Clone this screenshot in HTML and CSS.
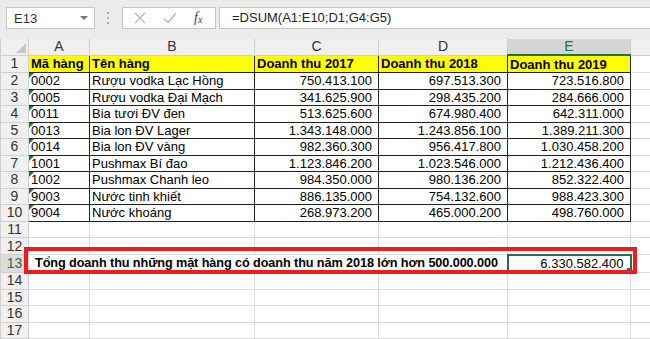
FILE: index.html
```html
<!DOCTYPE html>
<html lang="vi">
<head>
    <meta charset="UTF-8">
    <title>DSUM</title>
    <link rel="stylesheet" href="styles.css">
</head>
<body>
    <div class="toolbar">
        <div class="name-box">
            <span>E13</span>
            <span class="arrow"></span>
        </div>
        <svg class="grip" width="4" height="14" viewBox="0 0 4 14">
            <circle cx="2" cy="2" r="1" fill="#999"/>
            <circle cx="2" cy="7" r="1" fill="#999"/>
            <circle cx="2" cy="12" r="1" fill="#999"/>
        </svg>
        <div class="fx-box">
            <svg width="12" height="12" viewBox="0 0 12 12">
                <path d="M1 1 L11 11 M11 1 L1 11" stroke="#b4b4b4" stroke-width="1.2" fill="none"/>
            </svg>
            <svg width="14" height="12" viewBox="0 0 14 12">
                <path d="M1 6.5 L5 10.5 L13 1.5" stroke="#b4b4b4" stroke-width="1.3" fill="none"/>
            </svg>
            <span class="fx">f<sub>x</sub></span>
        </div>
        <div class="formula">=DSUM(A1:E10;D1;G4:G5)</div>
    </div>

    <div class="sheet">
        <table>
            <colgroup>
                <col style="width: 28px">
                <col style="width: 61px">
                <col style="width: 165px">
                <col style="width: 124px">
                <col style="width: 129px">
                <col style="width: 123px">
                <col style="width: 20px">
            </colgroup>
            <tr class="head">
                <th class="corner"></th>
                <th>A</th><th>B</th><th>C</th><th>D</th><th class="sel">E</th><th></th>
            </tr>
            <tr class="first">
                <th>1</th>
                <td class="box title">Mã hàng</td>
                <td class="box title">Tên hàng</td>
                <td class="box title">Doanh thu 2017</td>
                <td class="box title">Doanh thu 2018</td>
                <td class="box title">Doanh thu 2019</td>
                <td></td>
            </tr>
            <tr><th>2</th><td class="box code">0002</td><td class="box">Rượu vodka Lạc Hồng</td><td class="box num">750.413.100</td><td class="box num">697.513.300</td><td class="box num">723.516.800</td><td></td></tr>
            <tr><th>3</th><td class="box code">0005</td><td class="box">Rượu vodka Đại Mạch</td><td class="box num">341.625.900</td><td class="box num">298.435.200</td><td class="box num">284.666.000</td><td></td></tr>
            <tr><th>4</th><td class="box code">0011</td><td class="box">Bia tươi ĐV đen</td><td class="box num">513.625.600</td><td class="box num">674.980.400</td><td class="box num">642.311.000</td><td></td></tr>
            <tr><th>5</th><td class="box code">0013</td><td class="box">Bia lon ĐV Lager</td><td class="box num">1.343.148.000</td><td class="box num">1.243.856.100</td><td class="box num">1.389.211.300</td><td></td></tr>
            <tr><th>6</th><td class="box code">0014</td><td class="box">Bia lon ĐV vàng</td><td class="box num">982.360.300</td><td class="box num">956.417.800</td><td class="box num">1.030.458.200</td><td></td></tr>
            <tr><th>7</th><td class="box code">1001</td><td class="box">Pushmax Bí đao</td><td class="box num">1.123.846.200</td><td class="box num">1.023.546.000</td><td class="box num">1.212.436.400</td><td></td></tr>
            <tr><th>8</th><td class="box code">1002</td><td class="box">Pushmax Chanh leo</td><td class="box num">984.350.000</td><td class="box num">980.136.200</td><td class="box num">852.322.400</td><td></td></tr>
            <tr><th>9</th><td class="box code">9003</td><td class="box">Nước tinh khiết</td><td class="box num">886.135.000</td><td class="box num">754.132.600</td><td class="box num">988.423.300</td><td></td></tr>
            <tr><th>10</th><td class="box code">9004</td><td class="box">Nước khoáng</td><td class="box num">268.973.200</td><td class="box num">465.000.200</td><td class="box num">498.760.000</td><td></td></tr>
            <tr><th>11</th><td></td><td></td><td></td><td></td><td></td><td></td></tr>
            <tr><th>12</th><td></td><td></td><td></td><td></td><td></td><td></td></tr>
            <tr><th class="sel-row">13</th><td class="label" colspan="4">Tổng doanh thu những mặt hàng có doanh thu năm 2018 lớn hơn 500.000.000</td><td class="num active">6.330.582.400</td><td></td></tr>
            <tr><th>14</th><td></td><td></td><td></td><td></td><td></td><td></td></tr>
            <tr><th>15</th><td></td><td></td><td></td><td></td><td></td><td></td></tr>
            <tr><th>16</th><td></td><td></td><td></td><td></td><td></td><td></td></tr>
            <tr><th>17</th><td></td><td></td><td></td><td></td><td></td><td></td></tr>
        </table>
        <div class="callout"></div>
    </div>
</body>
</html>
```

FILE: styles.css
```css
body {
    margin: 0;
    width: 650px;
    height: 339px;
    overflow: hidden;
    background: #fff;
    font-family: "Liberation Sans", Arial, sans-serif;
    color: #000;
}

/* formula bar */
.toolbar {
    display: flex;
    align-items: center;
    height: 22px;
    padding: 7px 0 10px 6px;
    background: #ebebeb;
}

.name-box {
    display: flex;
    align-items: center;
    justify-content: space-between;
    box-sizing: border-box;
    width: 89px;
    height: 22px;
    padding: 0 6px 0 7px;
    background: #fff;
    border: 1px solid #c6c6c6;
    font-size: 13px;
    color: #333;
}

.name-box .arrow {
    width: 0;
    height: 0;
    border-left: 4px solid transparent;
    border-right: 4px solid transparent;
    border-top: 4px solid #777;
}

.grip {
    margin-left: 11px;
}

.fx-box {
    display: flex;
    align-items: center;
    box-sizing: border-box;
    width: 94px;
    height: 22px;
    margin-left: 12px;
    padding: 0 10px 0 11px;
    gap: 17px;
    background: #fff;
    border: 1px solid #c6c6c6;
}

.fx {
    font-family: "Liberation Serif", serif;
    font-style: italic;
    font-size: 14px;
    color: #444;
}

.fx sub {
    font-size: 10px;
    vertical-align: -1px;
}

.formula {
    flex: 1;
    box-sizing: border-box;
    height: 22px;
    margin-left: 3px;
    padding-left: 12px;
    line-height: 20px;
    background: #fff;
    border: 1px solid #c6c6c6;
    border-right: none;
    font-size: 13px;
    color: #222;
}

/* grid */
.sheet {
    position: relative;
}

table {
    table-layout: fixed;
    width: 650px;
    border-collapse: collapse;
    font-size: 13px;
}

td, th {
    height: 15.5px;
    padding: 0 2px;
    border: 1px solid #dadada;
    white-space: nowrap;
    overflow: hidden;
    line-height: 15px;
}

th {
    background: #f0f0f0;
    border-color: #cfcfcf;
    font-weight: normal;
    font-size: 14px;
    color: #333;
    text-align: center;
}

.head th {
    height: 15px;
    border-top: none;
}

.corner {
    position: relative;
}

.corner::after {
    content: "";
    position: absolute;
    right: 2px;
    bottom: 2px;
    border-left: 10px solid transparent;
    border-bottom: 10px solid #c8c8c8;
}

.head .sel {
    background: #d6d6d6;
    color: #217346;
    border-bottom: 2px solid #217346;
}

.sel-row {
    background: #dcdcdc;
    color: #217346;
}

.first td {
    height: 16px;
}

.box {
    border: 1px solid #222;
}

.title {
    background: #ffff00;
    font-weight: bold;
}

.num {
    text-align: right;
    padding-right: 6px;
}

.code {
    position: relative;
}

.code::before {
    content: "";
    position: absolute;
    left: 0;
    top: 0;
    border-top: 5px solid #1e7b34;
    border-right: 5px solid transparent;
}

.label {
    padding-left: 6px;
    font-weight: bold;
    font-size: 12.7px;
    letter-spacing: -0.1px;
    overflow: visible;
}

.active {
    position: relative;
    border: 2px solid #217346;
}

.active::after {
    content: "";
    position: absolute;
    right: -3px;
    bottom: -3px;
    width: 5px;
    height: 5px;
    background: #217346;
    border: 1px solid #fff;
}

/* annotation drawn over the sheet */
.callout {
    position: absolute;
    left: 24px;
    top: 208px;
    width: 605px;
    height: 19px;
    border: 4px solid #ee1c1c;
}
```
